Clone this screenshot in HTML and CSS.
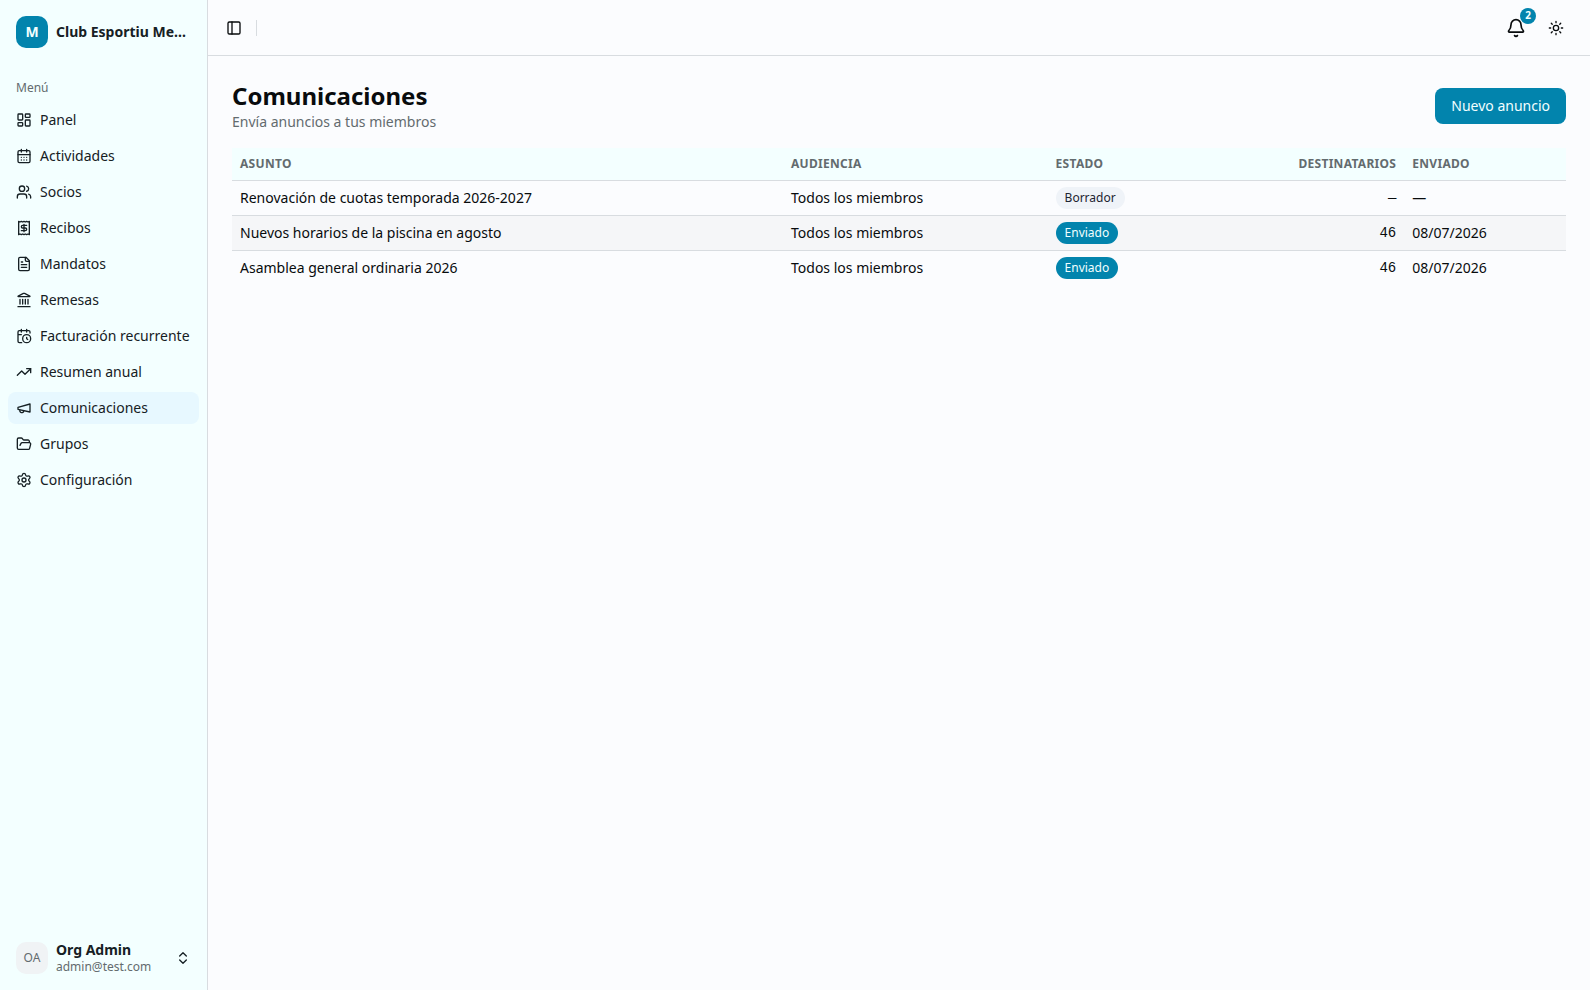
FILE: index.html
```html
<!DOCTYPE html>
<html lang="es">
<head>
<meta charset="utf-8">
<title>Comunicaciones</title>
<link rel="stylesheet" href="styles.css">
</head>
<body>
<div class="app">
  <aside class="sidebar">
    <div class="org">
      <span class="org-logo">M</span>
      <span class="org-name">Club Esportiu Me...</span>
    </div>
    <nav class="menu">
      <div class="menu-label">Menú</div>
      <ul class="menu-list">
        <li class="item"><svg class="icon" viewBox="0 0 24 24"><rect width="7" height="9" x="3" y="3" rx="1"/><rect width="7" height="5" x="14" y="3" rx="1"/><rect width="7" height="9" x="14" y="12" rx="1"/><rect width="7" height="5" x="3" y="16" rx="1"/></svg><span>Panel</span></li>
        <li class="item"><svg class="icon" viewBox="0 0 24 24"><path d="M8 2v4M16 2v4"/><rect width="18" height="18" x="3" y="4" rx="2"/><path d="M3 10h18M8 14h.01M12 14h.01M16 14h.01M8 18h.01M12 18h.01M16 18h.01"/></svg><span>Actividades</span></li>
        <li class="item"><svg class="icon" viewBox="0 0 24 24"><path d="M16 21v-2a4 4 0 0 0-4-4H6a4 4 0 0 0-4 4v2M16 3.128a4 4 0 0 1 0 7.744M22 21v-2a4 4 0 0 0-3-3.870"/><circle cx="9" cy="7" r="4"/></svg><span>Socios</span></li>
        <li class="item"><svg class="icon" viewBox="0 0 24 24"><path d="M4 2v20l2-1 2 1 2-1 2 1 2-1 2 1 2-1 2 1V2l-2 1-2-1-2 1-2-1-2 1-2-1-2 1Z"/><path d="M16 8h-6a2 2 0 1 0 0 4h4a2 2 0 1 1 0 4H8M12 17.5v-11"/></svg><span>Recibos</span></li>
        <li class="item"><svg class="icon" viewBox="0 0 24 24"><path d="M15 2H6a2 2 0 0 0-2 2v16a2 2 0 0 0 2 2h12a2 2 0 0 0 2-2V7Z"/><path d="M14 2v4a2 2 0 0 0 2 2h4M10 9H8M16 13H8M16 17H8"/></svg><span>Mandatos</span></li>
        <li class="item"><svg class="icon" viewBox="0 0 24 24"><path d="M10 18v-7M11.12 2.198a2 2 0 0 1 1.76.006l7.866 3.847c.476.233.31.949-.22.949H3.474c-.53 0-.695-.716-.22-.949zM14 18v-7M18 18v-7M3 22h18M6 18v-7"/></svg><span>Remesas</span></li>
        <li class="item"><svg class="icon" viewBox="0 0 24 24"><path d="M16 14v2.2l1.6 1M16 2v4M21 7.5V6a2 2 0 0 0-2-2H5a2 2 0 0 0-2 2v14a2 2 0 0 0 2 2h3.5M3 10h5M8 2v4"/><circle cx="16" cy="16" r="6"/></svg><span>Facturación recurrente</span></li>
        <li class="item"><svg class="icon" viewBox="0 0 24 24"><path d="M16 7h6v6"/><path d="m22 7-8.500 8.500-5-5L2 17"/></svg><span>Resumen anual</span></li>
        <li class="item item-active"><svg class="icon" viewBox="0 0 24 24"><path d="m3 11 18-5v12L3 14v-3z"/><path d="M11.600 16.800a3 3 0 1 1-5.800-1.600"/></svg><span>Comunicaciones</span></li>
        <li class="item"><svg class="icon" viewBox="0 0 24 24"><path d="m6 14 1.500-2.900A2 2 0 0 1 9.240 10H20a2 2 0 0 1 1.940 2.500l-1.540 6a2 2 0 0 1-1.950 1.500H4a2 2 0 0 1-2-2V5a2 2 0 0 1 2-2h3.900a2 2 0 0 1 1.690.900l.810 1.200a2 2 0 0 0 1.670.900H18a2 2 0 0 1 2 2v2"/></svg><span>Grupos</span></li>
        <li class="item"><svg class="icon" viewBox="0 0 24 24"><path d="M9.671 4.136a2.340 2.340 0 0 1 4.659 0 2.340 2.340 0 0 0 3.319 1.915 2.340 2.340 0 0 1 2.330 4.033 2.340 2.340 0 0 0 0 3.831 2.340 2.340 0 0 1-2.330 4.033 2.340 2.340 0 0 0-3.319 1.915 2.340 2.340 0 0 1-4.659 0 2.340 2.340 0 0 0-3.320-1.915 2.340 2.340 0 0 1-2.330-4.033 2.340 2.340 0 0 0 0-3.831A2.340 2.340 0 0 1 6.350 6.051a2.340 2.340 0 0 0 3.319-1.915"/><circle cx="12" cy="12" r="3"/></svg><span>Configuración</span></li>
      </ul>
    </nav>
    <div class="user">
      <span class="avatar">OA</span>
      <div class="user-text">
        <span class="user-name">Org Admin</span>
        <span class="user-mail">admin@test.com</span>
      </div>
      <svg class="icon" viewBox="0 0 24 24"><path d="m7 15 5 5 5-5M7 9l5-5 5 5"/></svg>
    </div>
  </aside>
  <div class="page">
    <header class="topbar">
      <div class="topbar-left">
        <svg class="icon" viewBox="0 0 24 24"><rect width="18" height="18" x="3" y="3" rx="2"/><path d="M9 3v18"/></svg>
        <span class="divider"></span>
      </div>
      <div class="topbar-right">
        <button class="bell" aria-label="Notificaciones">
          <svg class="icon icon-lg" viewBox="0 0 24 24"><path d="M10.268 21a2 2 0 0 0 3.464 0M3.262 15.326A1 1 0 0 0 4 17h16a1 1 0 0 0 .740-1.673C19.410 13.956 18 12.499 18 8A6 6 0 0 0 6 8c0 4.499-1.411 5.956-2.738 7.326"/></svg>
          <span class="count">2</span>
        </button>
        <svg class="icon" viewBox="0 0 24 24"><circle cx="12" cy="12" r="4"/><path d="M12 2v2M12 20v2M4.930 4.930l1.410 1.410M17.660 17.660l1.410 1.410M2 12h2M20 12h2M6.340 17.660l-1.410 1.410M19.070 4.930l-1.410 1.410"/></svg>
      </div>
    </header>
    <main class="content">
      <div class="heading">
        <div>
          <h1 class="title">Comunicaciones</h1>
          <p class="subtitle">Envía anuncios a tus miembros</p>
        </div>
        <button class="primary">Nuevo anuncio</button>
      </div>
      <table class="table">
        <colgroup><col class="c-subject"><col class="c-audience"><col class="c-status"><col class="c-count"><col class="c-date"></colgroup>
        <thead>
          <tr><th>Asunto</th><th>Audiencia</th><th>Estado</th><th class="num">Destinatarios</th><th>Enviado</th></tr>
        </thead>
        <tbody>
          <tr><td>Renovación de cuotas temporada 2026-2027</td><td>Todos los miembros</td><td><span class="badge badge-draft">Borrador</span></td><td class="num mono">—</td><td>—</td></tr>
          <tr><td>Nuevos horarios de la piscina en agosto</td><td>Todos los miembros</td><td><span class="badge">Enviado</span></td><td class="num mono">46</td><td>08/07/2026</td></tr>
          <tr><td>Asamblea general ordinaria 2026</td><td>Todos los miembros</td><td><span class="badge">Enviado</span></td><td class="num mono">46</td><td>08/07/2026</td></tr>
        </tbody>
      </table>
    </main>
  </div>
</div>
</body>
</html>
```
FILE: styles.css
```css
:root {
  --bg: #fbfcfe;
  --side: #f3ffff;
  --border: #d8dce0;
  --primary: #0284ad;
  --muted: #636b6e;
  --text: #080b0d;
  --side-text: #162024;
}
* { box-sizing: border-box; margin: 0; padding: 0; }
body {
  background: var(--bg);
  color: var(--text);
  font: 14px/20px "Noto Sans", sans-serif;
}
button { font: inherit; border: 0; background: none; color: inherit; }
.app { display: flex; height: 100vh; }
.icon {
  width: 16px;
  height: 16px;
  flex: none;
  fill: none;
  stroke: currentColor;
  stroke-width: 2;
  stroke-linecap: round;
  stroke-linejoin: round;
}
.icon-lg { width: 20px; height: 20px; }

.sidebar {
  display: flex;
  flex-direction: column;
  flex: none;
  width: 208px;
  background: var(--side);
  border-right: 1px solid var(--border);
  color: var(--side-text);
}
.org { display: flex; align-items: center; gap: 8px; height: 64px; padding: 0 16px; }
.org-logo {
  display: grid;
  place-items: center;
  flex: none;
  width: 32px;
  height: 32px;
  border-radius: 10px;
  background: var(--primary);
  color: #f2ffff;
  font-weight: 700;
}
.org-name { font-weight: 700; white-space: nowrap; }
.menu { flex: 1; padding: 8px; }
.menu-label { height: 32px; padding: 0 8px; color: var(--muted); font-size: 12px; line-height: 32px; }
.menu-list { display: flex; flex-direction: column; gap: 4px; list-style: none; }
.item {
  display: flex;
  align-items: center;
  gap: 8px;
  height: 32px;
  padding: 0 8px;
  border-radius: 8px;
  white-space: nowrap;
}
.item-active { background: #e7f8ff; }
.user { display: flex; align-items: center; gap: 8px; height: 64px; padding: 0 16px; }
.avatar {
  display: grid;
  place-items: center;
  width: 32px;
  height: 32px;
  border-radius: 10px;
  background: #f0f3f5;
  color: var(--muted);
  font-size: 12px;
}
.user-text { display: flex; flex: 1; flex-direction: column; }
.user-name { font-weight: 700; line-height: 17px; padding-bottom: 1px; }
.user-mail { color: var(--muted); font-size: 12px; line-height: 16px; }

.page { flex: 1; min-width: 0; }
.topbar {
  display: flex;
  align-items: center;
  justify-content: space-between;
  height: 56px;
  padding: 0 26px 0 18px;
  border-bottom: 1px solid var(--border);
}
.topbar-left { display: flex; align-items: center; gap: 14px; }
.divider { width: 1px; height: 16px; background: var(--border); }
.topbar-right { display: flex; align-items: center; gap: 22px; }
.bell { position: relative; display: flex; }
.count {
  position: absolute;
  top: -10px;
  right: -10px;
  width: 16px;
  height: 16px;
  border-radius: 8px;
  background: var(--primary);
  color: #f2ffff;
  font-size: 10px;
  font-weight: 700;
  line-height: 15px;
  text-align: center;
}
.content { display: flex; flex-direction: column; gap: 16px; padding: 24px; }
.heading { display: flex; align-items: center; justify-content: space-between; }
.title { font-size: 24px; font-weight: 700; line-height: 32px; }
.subtitle { color: var(--muted); }
.primary {
  height: 36px;
  padding: 0 16px;
  border-radius: 8px;
  background: var(--primary);
  color: #f2ffff;
}

.table { width: 100%; border-collapse: separate; border-spacing: 0; table-layout: fixed; }
.c-subject { width: 551px; }
.c-audience { width: 264.600px; }
.c-status { width: 232px; }
.c-count { width: 124.700px; }
.table th {
  height: 33px;
  padding: 0 8px;
  border-bottom: 1px solid var(--border);
  background: var(--side);
  color: var(--muted);
  font-size: 12px;
  font-weight: 700;
  letter-spacing: 0.3px;
  line-height: 16px;
  text-align: left;
  text-transform: uppercase;
}
.table td { height: 35px; padding: 0 8px; border-bottom: 1px solid var(--border); }
.table tbody tr:nth-child(even) { background: #f5f6f8; }
.table tbody tr:last-child td { height: 34px; border-bottom: 0; }
.table .num { text-align: right; }
.mono { font-family: "Liberation Mono", monospace; }
.badge {
  display: block;
  width: fit-content;
  height: 22px;
  padding: 3px 9px;
  border-radius: 11px;
  background: var(--primary);
  color: #f2ffff;
  font-size: 12px;
  line-height: 16px;
}
.badge-draft { background: #eff3f8; color: #1c2430; }
```
